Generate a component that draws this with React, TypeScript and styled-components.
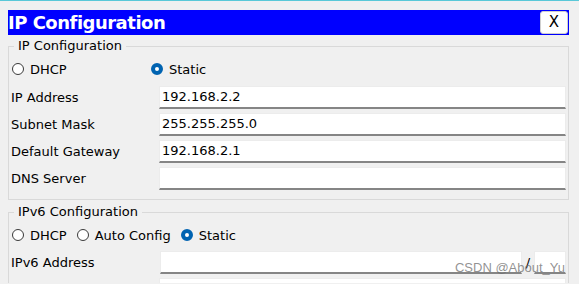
import React from 'react'
import styled, { createGlobalStyle } from 'styled-components'

const GlobalStyle = createGlobalStyle`
  html, body {
    margin: 0;
    padding: 0;
    background: #f0f0f0;
    overflow: hidden;
  }
  body {
    font-family: 'DejaVu Sans', Verdana, sans-serif;
    font-size: 13px;
    color: #000;
  }
`

const Window = styled.div`
  position: relative;
  border-top: 1px solid #5ac8d8;
  padding: 9px 10px 0 8px;
  height: 283px;
  box-sizing: border-box;
`

const TitleBar = styled.div`
  height: 25px;
  background: #0000ff;
  display: flex;
  align-items: center;
  justify-content: space-between;
  padding-right: 1px;
`

const Title = styled.div`
  color: #fff;
  font-weight: bold;
  font-size: 18px;
  letter-spacing: -0.5px;
  line-height: 25px;
`

const CloseButton = styled.button`
  width: 28px;
  height: 23px;
  background: #fff;
  border: 1px solid #cfcfcf;
  border-radius: 3px;
  font-family: 'DejaVu Sans', sans-serif;
  font-size: 15px;
  line-height: 1;
  padding: 0;
  color: #000;
`

const Group = styled.fieldset<{ $gap: number }>`
  margin: ${(p) => p.$gap}px 0 0;
  padding: 0 2px 9px;
  border: 1px solid #d9d9d9;
  min-width: 0;
`

const Legend = styled.legend`
  margin-left: 3px;
  padding: 0 4px;
  line-height: 16px;
  color: #000;
`

const RadioRow = styled.div<{ $top: number; $bottom: number }>`
  display: flex;
  align-items: center;
  height: 20px;
  margin: ${(p) => p.$top}px 0 ${(p) => p.$bottom}px;
`

const RadioItem = styled.label<{ $width?: number }>`
  display: flex;
  align-items: center;
  gap: 6px;
  padding-left: 1px;
  width: ${(p) => (p.$width ? `${p.$width}px` : 'auto')};
  margin-right: ${(p) => (p.$width ? 0 : 9)}px;
`

const RadioDot = styled.span<{ $checked?: boolean }>`
  width: 12px;
  height: 12px;
  border-radius: 50%;
  box-sizing: border-box;
  border: ${(p) => (p.$checked ? '4px solid #0063b1' : '1px solid #3a3a3a')};
  background: #fff;
`

const FieldGrid = styled.div`
  display: grid;
  grid-template-columns: 148px 1fr;
  row-gap: 4px;
  align-items: center;
`

const FieldLabel = styled.div`
  line-height: 16px;
`

const Input = styled.div`
  height: 23px;
  box-sizing: border-box;
  background: #fff;
  border: 1px solid #ececec;
  border-bottom: 2px solid #858585;
  padding: 0 2px;
  line-height: 20px;
  display: flex;
  align-items: center;
`

const PrefixRow = styled.div`
  display: grid;
  grid-template-columns: 1fr 12px 32px;
  align-items: center;
  padding-left: 1px;
`

const Slash = styled.span`
  text-align: center;
`

const Watermark = styled.div`
  position: absolute;
  right: 14px;
  top: 259px;
  font-family: 'Liberation Sans', Arial, sans-serif;
  font-size: 13px;
  color: rgba(110, 110, 110, 0.75);
  pointer-events: none;
`

const Radio = ({ label, checked, width }: { label: string; checked?: boolean; width?: number }) => (
  <RadioItem $width={width}>
    <RadioDot $checked={checked} />
    {label}
  </RadioItem>
)

const ipv4 = [
  { label: 'IP Address', value: '192.168.2.2' },
  { label: 'Subnet Mask', value: '255.255.255.0' },
  { label: 'Default Gateway', value: '192.168.2.1' },
  { label: 'DNS Server', value: '' },
]

const App = () => {
  return (
    <>
      <GlobalStyle />
      <Window>
        <TitleBar>
          <Title>IP Configuration</Title>
          <CloseButton>X</CloseButton>
        </TitleBar>

        <Group $gap={3}>
          <Legend>IP Configuration</Legend>
          <RadioRow $top={5} $bottom={7}>
            <Radio label="DHCP" width={138} />
            <Radio label="Static" checked />
          </RadioRow>
          <FieldGrid>
            {ipv4.map((f) => (
              <React.Fragment key={f.label}>
                <FieldLabel>{f.label}</FieldLabel>
                <Input>{f.value}</Input>
              </React.Fragment>
            ))}
          </FieldGrid>
        </Group>

        <Group $gap={4}>
          <Legend>IPv6 Configuration</Legend>
          <RadioRow $top={5} $bottom={6}>
            <Radio label="DHCP" />
            <Radio label="Auto Config" />
            <Radio label="Static" checked />
          </RadioRow>
          <FieldGrid>
            <FieldLabel>IPv6 Address</FieldLabel>
            <PrefixRow>
              <Input />
              <Slash>/</Slash>
              <Input />
            </PrefixRow>
            <FieldLabel />
            <Input />
          </FieldGrid>
        </Group>

        <Watermark>CSDN @About_Yu</Watermark>
      </Window>
    </>
  )
}

export default App
